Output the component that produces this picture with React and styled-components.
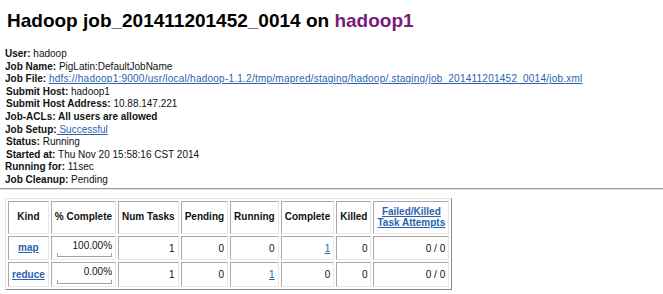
import styled, { createGlobalStyle } from "styled-components"

const Global = createGlobalStyle`
body {
  margin: 0;
  background: #fff;
  font-family: "Liberation Sans", Arial, sans-serif;
  color: #111;
}
`

const Page = styled.div`
padding: 0 0 0 5px;
`

const Title = styled.h1`
margin: 10px 0 16px 2px;
font-size: 19px;
line-height: 22px;
font-weight: bold;
color: #000;
`

const Host = styled.span`
color: #7b1a7b;
`

const InfoList = styled.div`
font-size: 10px;
line-height: 12.6px;
`

const InfoLine = styled.div`
white-space: nowrap;
padding-left: ${(p) => (p.indent ? "1px" : "0")};
`

const Label = styled.b`
color: #111;
`

const Link = styled.a`
color: #2a62b0;
text-decoration: underline;
font-weight: ${(p) => (p.bold ? "bold" : "normal")};
letter-spacing: ${(p) => (p.wide ? "0.24px" : "normal")};
`

const Rule = styled.hr`
margin: 1px 0 8px -5px;
border: none;
border-top: 1px solid #999;
border-bottom: 1px solid #e4e4e4;
height: 0;
`

const Table = styled.table`
margin-left: 0;
border-collapse: separate;
border-spacing: 2px;
border: 1px solid;
border-color: #e0e0e0 #8a8a8a #8a8a8a #e0e0e0;
font-size: 10px;
line-height: 11.5px;
`

const Th = styled.th`
padding: 4px 3px;
border: 1px solid;
border-color: #a9a9a9 #e6e6e6 #e6e6e6 #a9a9a9;
text-align: center;
font-weight: bold;
white-space: nowrap;
`

const Td = styled.td`
padding: 3px 3px 2px 3px;
border: 1px solid;
border-color: #a9a9a9 #e6e6e6 #e6e6e6 #a9a9a9;
text-align: right;
white-space: nowrap;
`

const Percent = styled.div`
text-align: right;
`

const Bar = styled.div`
margin: 2px 0 0 auto;
width: 53px;
height: 3px;
border: 1px solid #a0a0a0;
border-top: none;
`

const rows = [
  { kind: "map", pct: "100.00%", num: 1, pending: 0, running: "0", complete: "1", killed: 0, failed: "0 / 0" },
  { kind: "reduce", pct: "0.00%", num: 1, pending: 0, running: "1", complete: "0", killed: 0, failed: "0 / 0" },
]

const Num = ({ value }) => (value === "1" ? <Link href="#">1</Link> : value)

export default function App() {
  return (
    <Page>
      <Global />
      <Title>
        Hadoop job_201411201452_0014 on <Host>hadoop1</Host>
      </Title>
      <InfoList>
        <InfoLine><Label>User:</Label> hadoop</InfoLine>
        <InfoLine><Label>Job Name:</Label> PigLatin:DefaultJobName</InfoLine>
        <InfoLine>
          <Label>Job File:</Label>{" "}
          <Link href="#" wide>hdfs://hadoop1:9000/usr/local/hadoop-1.1.2/tmp/mapred/staging/hadoop/.staging/job_201411201452_0014/job.xml</Link>
        </InfoLine>
        <InfoLine indent><Label>Submit Host:</Label> hadoop1</InfoLine>
        <InfoLine indent><Label>Submit Host Address:</Label> 10.88.147.221</InfoLine>
        <InfoLine><Label>Job-ACLs: All users are allowed</Label></InfoLine>
        <InfoLine><Label>Job Setup:</Label><Link href="#"> Successful</Link></InfoLine>
        <InfoLine indent><Label>Status:</Label> Running</InfoLine>
        <InfoLine indent><Label>Started at:</Label> Thu Nov 20 15:58:16 CST 2014</InfoLine>
        <InfoLine><Label>Running for:</Label> 11sec</InfoLine>
        <InfoLine><Label>Job Cleanup:</Label> Pending</InfoLine>
      </InfoList>
      <Rule />
      <Table>
        <tbody>
          <tr>
            <Th>Kind</Th>
            <Th>% Complete</Th>
            <Th>Num Tasks</Th>
            <Th>Pending</Th>
            <Th>Running</Th>
            <Th>Complete</Th>
            <Th>Killed</Th>
            <Th>
              <Link href="#" bold>Failed/Killed<br />Task Attempts</Link>
            </Th>
          </tr>
          {rows.map((r) => (
            <tr key={r.kind}>
              <Th><Link href="#" bold>{r.kind}</Link></Th>
              <Td>
                <Percent>{r.pct}</Percent>
                <Bar />
              </Td>
              <Td>{r.num}</Td>
              <Td>{r.pending}</Td>
              <Td><Num value={r.running} /></Td>
              <Td><Num value={r.complete} /></Td>
              <Td>{r.killed}</Td>
              <Td>{r.failed}</Td>
            </tr>
          ))}
        </tbody>
      </Table>
    </Page>
  )
}
